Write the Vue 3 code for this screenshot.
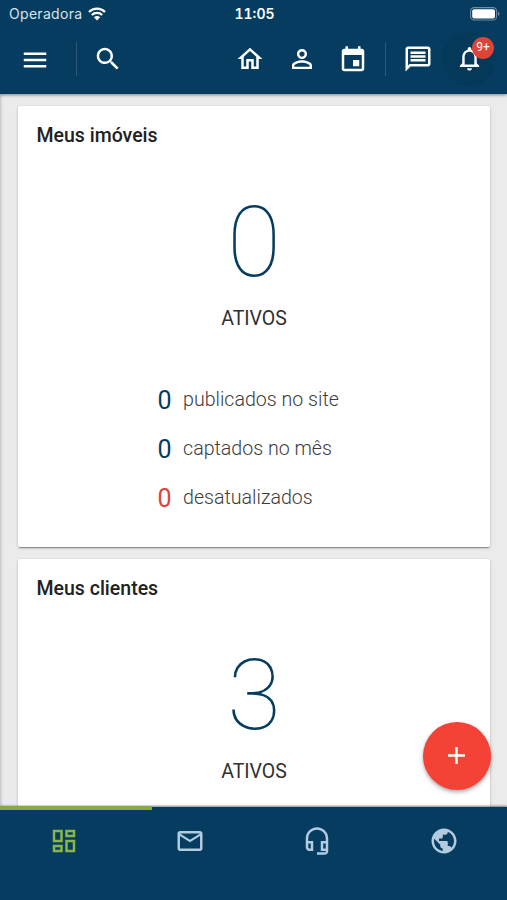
<script setup>
import { ref } from 'vue'

const cards = [
  {
    title: 'Meus imóveis',
    total: 0,
    label: 'ATIVOS',
    items: [
      { value: 0, text: 'publicados no site' },
      { value: 0, text: 'captados no mês' },
      { value: 0, text: 'desatualizados', alert: true },
    ],
  },
  { title: 'Meus clientes', total: 3, label: 'ATIVOS', items: [] },
]

const tabs = [
  { name: 'Painel', path: 'M19 5v2h-4V5h4M9 5v6H5V5h4m10 8v6h-4v-6h4M9 17v2H5v-2h4M21 3h-8v6h8V3zM11 3H3v10h8V3zm10 8h-8v10h8V11zm-10 4H3v6h8v-6z' },
  { name: 'Mensagens', path: 'M22 6c0-1.1-.9-2-2-2H4c-1.1 0-2 .9-2 2v12c0 1.1.9 2 2 2h16c1.1 0 2-.9 2-2V6zm-2 0l-8 5-8-5h16zm0 12H4V8l8 5 8-5v10z' },
  { name: 'Suporte', path: 'M19 14v4h-2v-4h2M7 14v4H6c-.55 0-1-.45-1-1v-3h2m5-13c-4.97 0-9 4.03-9 9v7c0 1.66 1.34 3 3 3h3v-8H5v-2c0-3.87 3.13-7 7-7s7 3.13 7 7v2h-4v8h4v1h-7v2h6c1.66 0 3-1.34 3-3V10c0-4.97-4.03-9-9-9z' },
  { name: 'Site', path: 'M12 2C6.48 2 2 6.48 2 12s4.48 10 10 10 10-4.48 10-10S17.52 2 12 2zm-1 17.93c-3.95-.49-7-3.85-7-7.93 0-.62.08-1.21.21-1.79L9 15v1c0 1.1.9 2 2 2v1.93zm6.9-2.54c-.26-.81-1-1.39-1.9-1.39h-1v-3c0-.55-.45-1-1-1H8v-2h2c.55 0 1-.45 1-1V7h2c1.1 0 2-.9 2-2v-.41c2.93 1.19 5 4.06 5 7.41 0 2.08-.8 3.97-2.1 5.39z' },
]

const activeTab = ref(0)
</script>

<template>
  <div class="app">
    <header class="header">
      <div class="status">
        <div class="carrier">
          <span>Operadora</span>
          <svg class="wifi" viewBox="0 0 18 14" fill="none">
            <path d="M1 5C5.4 .6 12.6 .6 17 5M3.8 8C6.7 5.1 11.3 5.1 14.2 8" stroke="currentColor" stroke-width="2.2" />
            <path d="M5.9 10.2C7.6 8.5 10.4 8.5 12.1 10.2L9 13.5z" fill="currentColor" />
          </svg>
        </div>
        <div class="time">11:05</div>
        <div class="battery_box">
          <svg class="battery" viewBox="0 0 30 14">
            <rect x=".6" y=".6" width="26" height="12.4" rx="3.6" fill="none" stroke="#6f8da3" stroke-width="1.1" />
            <rect x="2.2" y="2.2" width="22.8" height="9.2" rx="2" fill="#fff" />
            <path d="M28 4.8v4c.9-.3 1.5-1.1 1.5-2s-.6-1.7-1.5-2z" fill="#6f8da3" />
          </svg>
        </div>
      </div>
      <div class="toolbar">
        <svg class="icon menu" viewBox="0 0 24 24"><path d="M3 18h18v-2H3v2zm0-5h18v-2H3v2zm0-7v2h18V6H3z" /></svg>
        <div class="divider"></div>
        <svg class="icon search" viewBox="0 0 24 24"><path d="M15.5 14h-.79l-.28-.27C15.41 12.59 16 11.11 16 9.5 16 5.91 13.09 3 9.5 3S3 5.91 3 9.5 5.91 16 9.5 16c1.61 0 3.09-.59 4.23-1.57l.27.28v.79l5 4.99L20.49 19l-4.99-5zm-6 0C7.01 14 5 11.99 5 9.5S7.01 5 9.5 5 14 7.01 14 9.5 11.99 14 9.5 14z" /></svg>
        <svg class="icon home" viewBox="0 0 24 24"><path d="M12 5.69l5 4.5V18h-2v-6H9v6H7v-7.81l5-4.5M12 3L2 12h3v8h6v-6h2v6h6v-8h3L12 3z" /></svg>
        <svg class="icon person" viewBox="0 0 24 24"><path d="M12 5.9c1.16 0 2.1.94 2.1 2.1s-.94 2.1-2.1 2.1S9.9 9.16 9.9 8s.94-2.1 2.1-2.1m0 9c2.97 0 6.1 1.46 6.1 2.1v1.1H5.9V17c0-.64 3.13-2.1 6.1-2.1M12 4C9.79 4 8 5.79 8 8s1.79 4 4 4 4-1.79 4-4-1.79-4-4-4zm0 9c-2.67 0-8 1.34-8 4v3h16v-3c0-2.66-5.33-4-8-4z" /></svg>
        <svg class="icon event" viewBox="0 0 24 24"><path d="M17 12h-5v5h5v-5zM16 1v2H8V1H6v2H5c-1.11 0-1.99.9-1.99 2L3 19c0 1.1.89 2 2 2h14c1.1 0 2-.9 2-2V5c0-1.1-.9-2-2-2h-1V1h-2zm3 18H5V8h14v11z" /></svg>
        <div class="divider second"></div>
        <svg class="icon chat" viewBox="0 0 24 24"><path d="M4 4h16v12H5.17L4 17.17V4m0-2c-1.1 0-1.99.9-1.99 2L2 22l4-4h14c1.1 0 2-.9 2-2V4c0-1.1-.9-2-2-2H4zm2 10h12v2H6v-2zm0-3h12v2H6V9zm0-3h12v2H6V6z" /></svg>
        <div class="bell">
          <svg class="icon" viewBox="0 0 24 24"><path d="M12 22c1.1 0 2-.9 2-2h-4c0 1.1.9 2 2 2zm6-6v-5c0-3.07-1.63-5.64-4.5-6.32V4c0-.83-.67-1.5-1.5-1.5s-1.5.67-1.5 1.5v.68C7.64 5.36 6 7.92 6 11v5l-2 2v1h16v-1l-2-2zm-2 1H8v-6c0-2.48 1.51-4.5 4-4.5s4 2.02 4 4.5v6z" /></svg>
          <span class="badge">9+</span>
        </div>
      </div>
    </header>

    <main class="content">
      <section v-for="card in cards" :key="card.title" class="card">
        <h2 class="title">{{ card.title }}</h2>
        <div class="total">{{ card.total }}</div>
        <div class="label">{{ card.label }}</div>
        <ul v-if="card.items.length" class="items">
          <li v-for="item in card.items" :key="item.text" :class="{ alert: item.alert }">
            <span class="value">{{ item.value }}</span>
            <span>{{ item.text }}</span>
          </li>
        </ul>
      </section>
    </main>

    <button class="fab">
      <svg viewBox="0 0 24 24"><path d="M19 13h-6v6h-2v-6H5v-2h6V5h2v6h6v2z" /></svg>
    </button>

    <nav class="tabs">
      <div v-for="(tab, i) in tabs" :key="tab.name" class="tab" :class="{ active: activeTab === i }" @click="activeTab = i">
        <svg class="icon" viewBox="0 0 24 24"><path :d="tab.path" /></svg>
      </div>
      <div class="indicator"></div>
    </nav>
  </div>
</template>

<style>
body {
  margin: 0;
}
</style>

<style scoped>
.app {
  position: relative;
  display: flex;
  flex-direction: column;
  height: 900px;
  overflow: hidden;
  background-color: #ebebeb;
  font-family: Roboto, sans-serif;
  color: #212121;
}
.header {
  position: relative;
  z-index: 2;
  flex: none;
  height: 94px;
  background-color: #053c5f;
  color: #fff;
  box-shadow: 0 1px 3px rgba(0, 0, 0, .45);
}
.status {
  display: grid;
  grid-template-columns: 1fr auto 1fr;
  align-items: center;
  height: 27px;
  padding: 0 7px 0 9px;
  font-family: Inter, sans-serif;
  font-size: 14px;
}
.carrier {
  display: flex;
  align-items: center;
  gap: 6px;
  color: #d9e3ea;
  letter-spacing: .3px;
}
.wifi {
  width: 18px;
  height: 14px;
  color: #fff;
}
.time {
  font-weight: 600;
  font-variant-numeric: tabular-nums;
}
.battery_box {
  display: flex;
  justify-content: flex-end;
}
.battery {
  width: 30px;
  height: 14px;
}
.toolbar {
  display: flex;
  align-items: center;
  height: 64px;
  padding-left: 20px;
}
.icon {
  display: block;
  flex: none;
  width: 30px;
  height: 30px;
  fill: currentColor;
}
.menu {
  margin-top: 1px;
}
.divider {
  width: 1px;
  height: 34px;
  margin-left: 26px;
  background-color: #2c5a78;
}
.search {
  margin-top: -1px;
  margin-left: 16px;
}
.home {
  margin-top: -1px;
  margin-left: 112px;
}
.person {
  margin-top: -1px;
  margin-left: 22px;
}
.event {
  margin-top: 1px;
  margin-left: 21px;
}
.second {
  margin-left: 17px;
}
.chat {
  margin-top: -1px;
  margin-left: 17px;
}
.bell {
  position: relative;
  display: flex;
  align-items: center;
  justify-content: center;
  width: 54px;
  height: 54px;
  margin-left: 9px;
  border-radius: 50%;
  background-color: #053959;
}
.bell .icon {
  width: 29px;
  height: 29px;
  margin-top: -1px;
}
.badge {
  position: absolute;
  top: 5px;
  right: 2px;
  width: 22px;
  height: 22px;
  border-radius: 50%;
  background-color: #db4437;
  font-size: 12px;
  line-height: 21px;
  text-align: center;
}
.content {
  display: flex;
  flex: 1;
  flex-direction: column;
  gap: 12px;
  min-height: 0;
  padding: 12px 17px 0 18px;
  overflow: hidden;
  box-shadow: inset 3px 0 3px -2px rgba(0, 0, 0, .2);
}
.card {
  flex: none;
  height: 441px;
  border-radius: 2px;
  background-color: #fff;
  box-shadow: 0 1px 3px rgba(0, 0, 0, .25), 0 2px 1px -1px rgba(0, 0, 0, .3);
}
.title {
  margin: 0;
  padding: 18px 18px 0 18.5px;
  font-size: 19.5px;
  font-weight: 500;
  line-height: 24px;
}
.total {
  margin-top: 36px;
  color: #053c5f;
  font-size: 98px;
  font-weight: 100;
  line-height: 118px;
  text-align: center;
}
.label {
  margin-top: 5px;
  color: #303030;
  font-size: 19.5px;
  line-height: 24px;
  text-align: center;
}
.items {
  display: flex;
  flex-direction: column;
  gap: 19px;
  margin: 54px 0 0;
  padding: 0 0 0 139.5px;
  list-style: none;
  color: #3c3c3c;
  font-size: 19.6px;
  font-weight: 300;
  line-height: 30px;
}
.items li {
  display: flex;
  gap: 11.5px;
  height: 30px;
}
.value {
  padding-top: 2px;
  color: #053c5f;
  font-size: 25px;
  font-weight: 400;
  line-height: 28px;
}
.alert .value {
  color: #db4437;
}
.fab {
  position: absolute;
  z-index: 3;
  right: 16px;
  bottom: 110px;
  display: flex;
  align-items: center;
  justify-content: center;
  width: 68.5px;
  height: 68.5px;
  padding: 0;
  border: 0;
  border-radius: 50%;
  background-color: #f44336;
  box-shadow: 0 2px 4px rgba(0, 0, 0, .35);
}
.fab svg {
  width: 29px;
  height: 29px;
  fill: #fff;
}
.tabs {
  position: relative;
  z-index: 2;
  display: flex;
  flex: none;
  height: 93px;
  background-color: #053c5f;
  box-shadow: 0 -1px 2px rgba(0, 0, 0, .5);
}
.tab {
  display: flex;
  flex: 1;
  justify-content: center;
  padding-top: 19px;
  color: #b3cbdf;
  cursor: pointer;
}
.tab.active .icon {
  margin-left: 1px;
}
.tab.active {
  color: #8bb548;
}
.indicator {
  position: absolute;
  top: -1px;
  left: 0;
  width: 152px;
  height: 4px;
  background-color: #86aa43;
}
</style>
